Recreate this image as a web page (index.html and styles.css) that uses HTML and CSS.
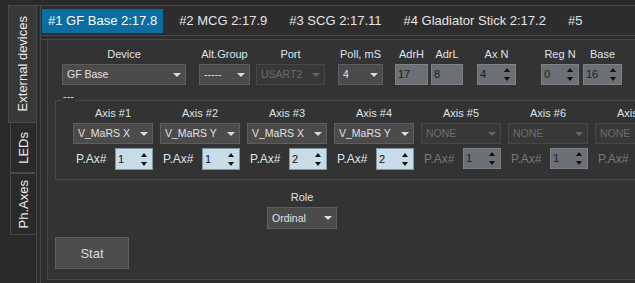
FILE: index.html
```html
<!DOCTYPE html>
<html>
<head>
<meta charset="utf-8">
<link rel="stylesheet" href="styles.css">
</head>
<body>
<div class="app">
  <nav class="vtabs">
    <div class="vtab vtab-active vtab-ext"><span class="vtab-text">External devices</span></div>
    <div class="vtab vtab-leds"><span class="vtab-text">LEDs</span></div>
    <div class="vtab vtab-axes"><span class="vtab-text">Ph.Axes</span></div>
  </nav>
  <main class="pane">
    <div class="tabs">
      <div class="tabbar">
        <div class="tab tab-active">#1 GF Base 2:17.8</div>
        <div class="tab">#2 MCG 2:17.9</div>
        <div class="tab">#3 SCG 2:17.11</div>
        <div class="tab">#4 Gladiator Stick 2:17.2</div>
        <div class="tab">#5</div>
      </div>
      <div class="page">
        <div class="scroll">
          <div class="fields">
            <div class="field f-device"><div class="lbl">Device</div><div class="combo"><span>GF Base</span></div></div>
            <div class="field f-alt"><div class="lbl">Alt.Group</div><div class="combo"><span>-----</span></div></div>
            <div class="field f-port"><div class="lbl">Port</div><div class="combo combo-dis"><span>USART2</span></div></div>
            <div class="field f-poll"><div class="lbl">Poll, mS</div><div class="combo"><span>4</span></div></div>
            <div class="field f-adrh"><div class="lbl">AdrH</div><div class="edit">17</div></div>
            <div class="field f-adrl"><div class="lbl">AdrL</div><div class="edit">8</div></div>
            <div class="field f-axn"><div class="lbl">Ax N</div><div class="spin spin-gray"><span>4</span><i class="arrows"><b class="up"></b><b class="dn"></b></i></div></div>
            <div class="field f-regn"><div class="lbl">Reg N</div><div class="spin spin-gray"><span>0</span><i class="arrows"><b class="up"></b><b class="dn"></b></i></div></div>
            <div class="field f-base"><div class="lbl">Base</div><div class="spin spin-gray"><span>16</span><i class="arrows"><b class="up"></b><b class="dn"></b></i></div></div>
          </div>

          <div class="group">
            <div class="group-title">---</div>
            <div class="axes">
              <div class="axis">
                <div class="lbl">Axis #1</div>
                <div class="combo"><span>V_MaRS X</span></div>
                <div class="pax"><span class="pax-lbl">P.Ax#</span><div class="spin spin-blue"><span>1</span><i class="arrows"><b class="up"></b><b class="dn"></b></i></div></div>
              </div>
              <div class="axis">
                <div class="lbl">Axis #2</div>
                <div class="combo"><span>V_MaRS Y</span></div>
                <div class="pax"><span class="pax-lbl">P.Ax#</span><div class="spin spin-blue"><span>1</span><i class="arrows"><b class="up"></b><b class="dn"></b></i></div></div>
              </div>
              <div class="axis">
                <div class="lbl">Axis #3</div>
                <div class="combo"><span>V_MaRS X</span></div>
                <div class="pax"><span class="pax-lbl">P.Ax#</span><div class="spin spin-blue"><span>2</span><i class="arrows"><b class="up"></b><b class="dn"></b></i></div></div>
              </div>
              <div class="axis">
                <div class="lbl">Axis #4</div>
                <div class="combo"><span>V_MaRS Y</span></div>
                <div class="pax"><span class="pax-lbl">P.Ax#</span><div class="spin spin-blue"><span>2</span><i class="arrows"><b class="up"></b><b class="dn"></b></i></div></div>
              </div>
              <div class="axis">
                <div class="lbl">Axis #5</div>
                <div class="combo combo-dis"><span>NONE</span></div>
                <div class="pax"><span class="pax-lbl pax-dis">P.Ax#</span><div class="spin spin-gray"><span>1</span><i class="arrows"><b class="up"></b><b class="dn"></b></i></div></div>
              </div>
              <div class="axis">
                <div class="lbl">Axis #6</div>
                <div class="combo combo-dis"><span>NONE</span></div>
                <div class="pax"><span class="pax-lbl pax-dis">P.Ax#</span><div class="spin spin-gray"><span>1</span><i class="arrows"><b class="up"></b><b class="dn"></b></i></div></div>
              </div>
              <div class="axis">
                <div class="lbl">Axis #7</div>
                <div class="combo combo-dis"><span>NONE</span></div>
                <div class="pax"><span class="pax-lbl pax-dis">P.Ax#</span><div class="spin spin-gray"><span>1</span><i class="arrows"><b class="up"></b><b class="dn"></b></i></div></div>
              </div>
            </div>
          </div>

          <div class="role">
            <div class="lbl">Role</div>
            <div class="combo combo-role"><span>Ordinal</span></div>
          </div>

          <button class="stat">Stat</button>
        </div>
      </div>
    </div>
  </main>
</div>
</body>
</html>
```

FILE: styles.css
```css
* { box-sizing: border-box; }
html, body {
  margin: 0;
  padding: 0;
  width: 635px;
  height: 283px;
  overflow: hidden;
  background: #2a2a2a;
  font-family: "Liberation Sans", Arial, sans-serif;
  font-size: 11px;
  color: #e2e2e2;
}
.app {
  display: flex;
  padding-top: 5px;
  height: 283px;
}

/* vertical tabs */
.vtabs {
  width: 36px;
  flex: none;
  display: flex;
  flex-direction: column;
}
.vtab {
  display: flex;
  align-items: center;
  justify-content: center;
  border-left: 1px solid #474747;
  color: #ececec;
  font-size: 13px;
}
.vtab-text {
  writing-mode: vertical-rl;
  transform: rotate(180deg);
  line-height: 15px;
}
.vtab-ext {
  margin-left: 8px;
  width: 28px;
  height: 118px;
  background: #383838;
  border-top: 1px solid #4a4a4a;
  border-bottom: 1px solid #4a4a4a;
  border-left-color: #4a4a4a;
}
.vtab-leds {
  margin-left: 10px;
  width: 25px;
  height: 51px;
  border-bottom: 2px solid #4a4a4a;
}
.vtab-axes {
  margin-left: 10px;
  width: 25px;
  height: 61px;
  border-bottom: 1px solid #474747;
}

/* main pane */
.pane {
  flex: 1;
  border-left: 1px solid #474747;
  border-top: 1px solid #474747;
  padding-left: 3px;
  background: #2d2d2d;
  min-width: 0;
}
.tabs {
  border-left: 1px solid #474747;
  height: 100%;
  background: #2d2d2d;
}
.tabbar {
  height: 30px;
  display: flex;
  padding: 3px 0 0 1px;
  border-bottom: 1px solid #474747;
  white-space: nowrap;
}
.tab {
  height: 24px;
  line-height: 24px;
  padding: 0 6px;
  margin-right: 10px;
  font-size: 13px;
  color: #e4e4e4;
  flex: none;
}
.tab-active {
  background: #0a6ea3;
  color: #ffffff;
}
.page {
  margin-top: 3px;
  border-top: 1px solid #474747;
  background: #2f2f2f;
  padding-left: 6px;
}
.scroll {
  height: 240px;
  background: #333333;
  border-left: 1px solid #474747;
  border-bottom: 1px solid #474747;
  overflow: hidden;
}

/* controls */
.lbl {
  height: 14px;
  line-height: 14px;
  color: #dde3ea;
  white-space: nowrap;
  text-align: center;
}
.combo {
  height: 21px;
  line-height: 19px;
  background: #4b4b4b;
  border: 1px solid #5e5e5e;
  padding-left: 4px;
  color: #e2e2e2;
  font-size: 10.5px;
  white-space: nowrap;
  overflow: hidden;
  display: flex;
  align-items: center;
}
.combo span { flex: 1; overflow: hidden; }
.combo::after {
  content: "";
  flex: none;
  width: 0;
  height: 0;
  margin: 0 4px 0 2px;
  border-left: 4px solid transparent;
  border-right: 4px solid transparent;
  border-top: 4px solid #dcdcdc;
}
.combo-dis {
  background: #383838;
  border-color: #474747;
  color: #6c6c6c;
}
.combo-dis::after { border-top-color: #666666; }
.combo-role { height: 22px; }

.edit {
  height: 21px;
  line-height: 19px;
  background: #6c7074;
  border: 1px solid #7e8286;
  color: #1c1c1c;
  padding-left: 2px;
}
.spin {
  height: 21px;
  display: flex;
  align-items: center;
  border: 1px solid #7e8286;
  background: #6c7074;
  color: #1c1c1c;
  padding-left: 2px;
}
.spin span { flex: 1; line-height: 19px; }
.spin-blue {
  background: #c8dce8;
  border-color: #8597a3;
  color: #111111;
  height: 22px;
}
.arrows {
  flex: none;
  display: flex;
  flex-direction: column;
  gap: 5px;
  margin-right: 5px;
}
.arrows b {
  display: block;
  width: 0;
  height: 0;
  border-left: 3.5px solid transparent;
  border-right: 3.5px solid transparent;
}
.arrows .up { border-bottom: 4px solid #111; }
.arrows .dn { border-top: 4px solid #111; }

/* top field row */
.fields {
  display: flex;
  padding-top: 7px;
}
.field {
  display: flex;
  flex-direction: column;
  gap: 3px;
  flex: none;
}
.f-device { margin-left: 14px; width: 124px; }
.f-alt { margin-left: 13px; width: 51px; }
.f-port { margin-left: 6px; width: 69px; }
.f-poll { margin-left: 13px; width: 45px; }
.f-adrh { margin-left: 12px; width: 33px; }
.f-adrl { margin-left: 3px; width: 32px; }
.f-axn { margin-left: 14px; width: 39px; }
.f-regn { margin-left: 25px; width: 38px; }
.f-base { margin-left: 4px; width: 39px; }

/* axes group */
.group {
  margin: 15px 0 0 7px;
  width: 700px;
  border: 1px solid #474747;
  padding-bottom: 9px;
}
.group-title {
  margin: -11px 0 0 6px;
  padding: 0 1px;
  width: fit-content;
  height: 12px;
  line-height: 12px;
  background: #333333;
  color: #dde3ea;
}
.axes {
  display: flex;
  gap: 7px;
  margin-top: 4px;
  padding-left: 17px;
}
.axis {
  width: 80px;
  flex: none;
  display: flex;
  flex-direction: column;
}
.axis .combo { margin-top: 3px; }
.pax {
  margin-top: 4px;
  display: flex;
  align-items: center;
  justify-content: space-between;
  padding-left: 3px;
}
.pax .spin { width: 38px; }
.pax-lbl {
  font-size: 12px;
  color: #dde3ea;
}
.pax-dis { color: #787878; }

/* role */
.role {
  margin: 10px 0 0 219px;
  width: 70px;
  display: flex;
  flex-direction: column;
  gap: 3px;
}

.stat {
  display: block;
  margin: 8px 0 0 7px;
  width: 74px;
  height: 32px;
  background: #4c4c4c;
  border: 1px solid #5f5f5f;
  color: #dcdcdc;
  font-family: "Liberation Sans", Arial, sans-serif;
  font-size: 13px;
  padding: 0;
}
```
